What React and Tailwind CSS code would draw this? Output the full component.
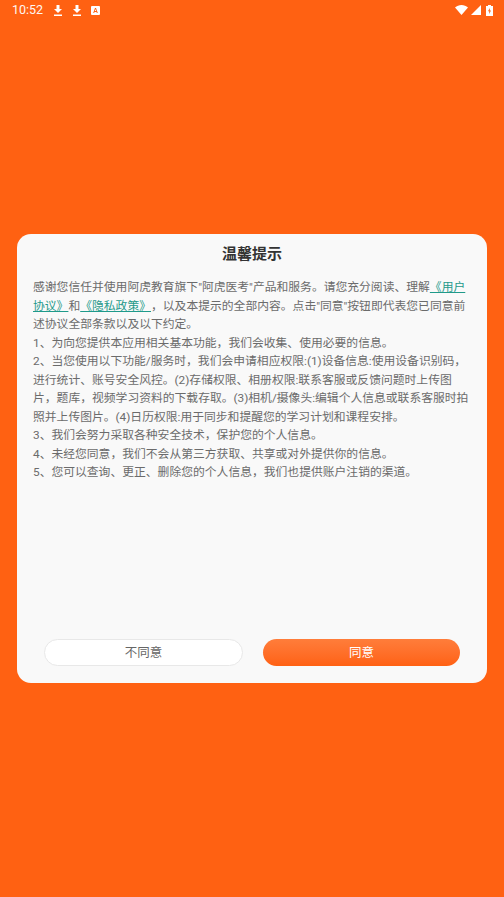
import React from "react";

const font = { fontFamily: '"Roboto", "Noto Sans CJK SC", sans-serif' };

function StatusBar() {
  return (
    <div className="h-[20px] shrink-0 flex items-center pl-[12px] pr-[11px] text-white">
      <span className="text-[12.5px] leading-none w-[30px] opacity-95">10:52</span>
      <div className="flex items-center gap-[9px] ml-[11px]">
        <DownloadIcon />
        <DownloadIcon />
        <svg width="9" height="9" viewBox="0 0 9 9">
          <path fill="#fff" fillRule="evenodd" d="M0 1a1 1 0 0 1 1-1h7a1 1 0 0 1 1 1v7a1 1 0 0 1-1 1H1a1 1 0 0 1-1-1zM4 2 2.2 7h1l.3-1h2l.3 1h1L5 2zM3.8 5.1 4.500 3l.7 2.100z" />
        </svg>
      </div>
      <div className="ml-auto flex items-center gap-[3px]">
        <svg width="13" height="10" viewBox="0 0 13 10">
          <path fill="#fff" d="M0 2.600C1.800 1 4 0 6.500 0S11.200 1 13 2.600L6.500 10z" />
        </svg>
        <svg width="10" height="10" viewBox="0 0 10 10">
          <path fill="#fff" d="M10 0v10H0z" />
        </svg>
        <svg width="7" height="11" viewBox="0 0 7 11" className="ml-[2px]">
          <path fill="#fff" fillRule="evenodd" d="M2 0h3v1h2v10H0V1h2zM3.800 3 2 6.300h1.200V9L5 5.600H3.800z" />
        </svg>
      </div>
    </div>
  );
}

function DownloadIcon() {
  return (
    <svg width="10" height="11" viewBox="0 0 10 11">
      <path fill="#fff" d="M3.500 0h3v4H9L5 8 1 4h2.500zM1 9.500h8V11H1z" />
    </svg>
  );
}

export default function App() {
  return (
    <div className="min-h-screen bg-[#ff6112] flex flex-col" style={font}>
      <StatusBar />
      <div className="mt-[214px] mx-[17px] h-[449px] bg-[#f9f9f9] rounded-[14px] flex flex-col">
        <h2 className="text-center text-[15px] font-bold text-[#333333] leading-[20px] mt-[10px]">
          温馨提示
        </h2>
        <div className="mt-[14.250px] pl-[16px] pr-[18px] text-[11.8px] leading-[18.500px] text-[#6b6b6b] [text-spacing-trim:space-all]">
          <p>
            感谢您信任并使用阿虎教育旗下"阿虎医考"产品和服务。请您充分阅读、理解
            <a className="text-[#1f9a8a] underline">《用户协议》</a>
            和
            <a className="text-[#1f9a8a] underline">《隐私政策》</a>
            ，以及本提示的全部内容。点击"同意"按钮即代表您已同意前述协议全部条款以及以下约定。
          </p>
          <p>1、为向您提供本应用相关基本功能，我们会收集、使用必要的信息。</p>
          <p>
            2、当您使用以下功能/服务时，我们会申请相应权限:(1)设备信息:使用设备识别码，进行统计、账号安全风控。(2)存储权限、相册权限:联系客服或反馈问题时上传图片，题库，视频学习资料的下载存取。(3)相机/摄像头:编辑个人信息或联系客服时拍照并上传图片。(4)日历权限:用于同步和提醒您的学习计划和课程安排。
          </p>
          <p>3、我们会努力采取各种安全技术，保护您的个人信息。</p>
          <p>4、未经您同意，我们不会从第三方获取、共享或对外提供你的信息。</p>
          <p>5、您可以查询、更正、删除您的个人信息，我们也提供账户注销的渠道。</p>
        </div>
        <div className="mt-auto mb-[17px] px-[27px] flex gap-[20px]">
          <button className="flex-1 h-[27px] pt-[2px] rounded-full bg-white border border-[#e8e8e8] text-[12.500px] text-[#666666]">
            不同意
          </button>
          <button className="flex-1 h-[27px] pt-[2px] rounded-full bg-gradient-to-b from-[#ff7d3a] to-[#ff6112] text-[12.500px] text-white">
            同意
          </button>
        </div>
      </div>
    </div>
  );
}
